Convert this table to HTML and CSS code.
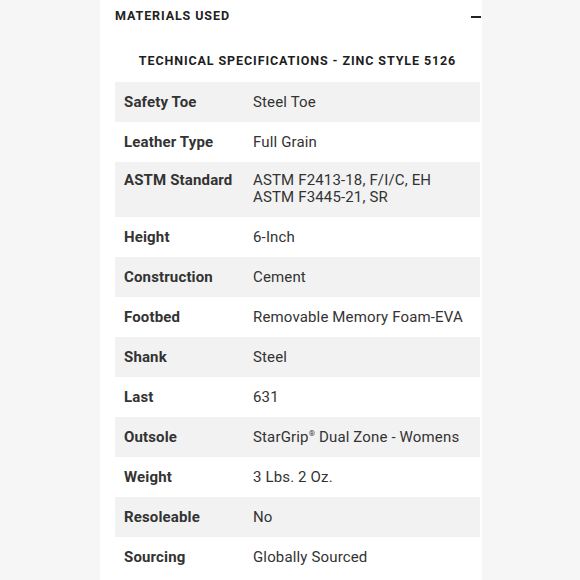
FILE: index.html
```html
<!DOCTYPE html>
<html lang="en">
<head>
<meta charset="utf-8">
<title>Materials Used</title>
<link rel="stylesheet" href="styles.css">
</head>
<body>
<div class="page">
  <section class="panel">
    <div class="acc-head">
      <h2 class="acc-title">MATERIALS USED</h2>
      <span class="minus"></span>
    </div>
    <h3 class="spec-title">TECHNICAL SPECIFICATIONS - ZINC STYLE 5126</h3>
    <table class="spec">
      <colgroup><col class="c-label"><col class="c-value"></colgroup>
      <tbody>
        <tr><th>Safety Toe</th><td>Steel Toe</td></tr>
        <tr><th>Leather Type</th><td>Full Grain</td></tr>
        <tr class="tall"><th>ASTM Standard</th><td>ASTM F2413-18, F/I/C, EH<br>ASTM F3445-21, SR</td></tr>
        <tr><th>Height</th><td>6-Inch</td></tr>
        <tr><th>Construction</th><td>Cement</td></tr>
        <tr><th>Footbed</th><td>Removable Memory Foam-EVA</td></tr>
        <tr><th>Shank</th><td>Steel</td></tr>
        <tr><th>Last</th><td>631</td></tr>
        <tr><th>Outsole</th><td>StarGrip<sup class="reg">®</sup> Dual Zone - Womens</td></tr>
        <tr><th>Weight</th><td>3 Lbs. 2 Oz.</td></tr>
        <tr><th>Resoleable</th><td>No</td></tr>
        <tr><th>Sourcing</th><td>Globally Sourced</td></tr>
      </tbody>
    </table>
  </section>
</div>
</body>
</html>
```

FILE: styles.css
```css
html, body {
  margin: 0;
  padding: 0;
  background: #f6f6f6;
}
body {
  font-family: Roboto, "Liberation Sans", sans-serif;
  color: #2e2e2e;
}
.page {
  display: flex;
  width: 580px;
  height: 580px;
  overflow: hidden;
}
.panel {
  margin-left: 100px;
  width: 382px;
  min-height: 580px;
  background: #ffffff;
  padding: 0 1px 0 15px;
  box-sizing: border-box;
}
.acc-head {
  display: flex;
  justify-content: space-between;
  align-items: center;
  padding-top: 8px;
  height: 16px;
}
.acc-title {
  margin: 0;
  font-size: 12.5px;
  line-height: 16px;
  font-weight: 700;
  letter-spacing: 0.9px;
  color: #222;
  white-space: nowrap;
}
.minus {
  width: 10px;
  height: 2px;
  background: #222;
  margin-top: 2px;
}
.spec-title {
  margin: 29px 0 13px;
  width: 365px;
  text-align: center;
  font-size: 12.5px;
  line-height: 16px;
  font-weight: 700;
  letter-spacing: 0.9px;
  color: #1e1e1e;
  white-space: nowrap;
}
.spec {
  width: 365px;
  table-layout: fixed;
  border-collapse: collapse;
  font-size: 15px;
  letter-spacing: 0.15px;
}
.c-label { width: 129px; }
.spec tr:nth-child(odd) {
  background: #f2f2f2;
}
.spec th, .spec td {
  text-align: left;
  vertical-align: top;
  padding: 12px 9px;
  line-height: 16px;
  white-space: nowrap;
}
.spec th {
  font-weight: 700;
  color: #333;
}
.spec td {
  font-weight: 400;
  color: #333;
}
.spec tr.tall td, .spec tr.tall th {
  padding-top: 10px;
  padding-bottom: 11px;
  line-height: 17px;
}
.reg {
  font-size: 8px;
  line-height: 0;
  vertical-align: 6px;
}
```
